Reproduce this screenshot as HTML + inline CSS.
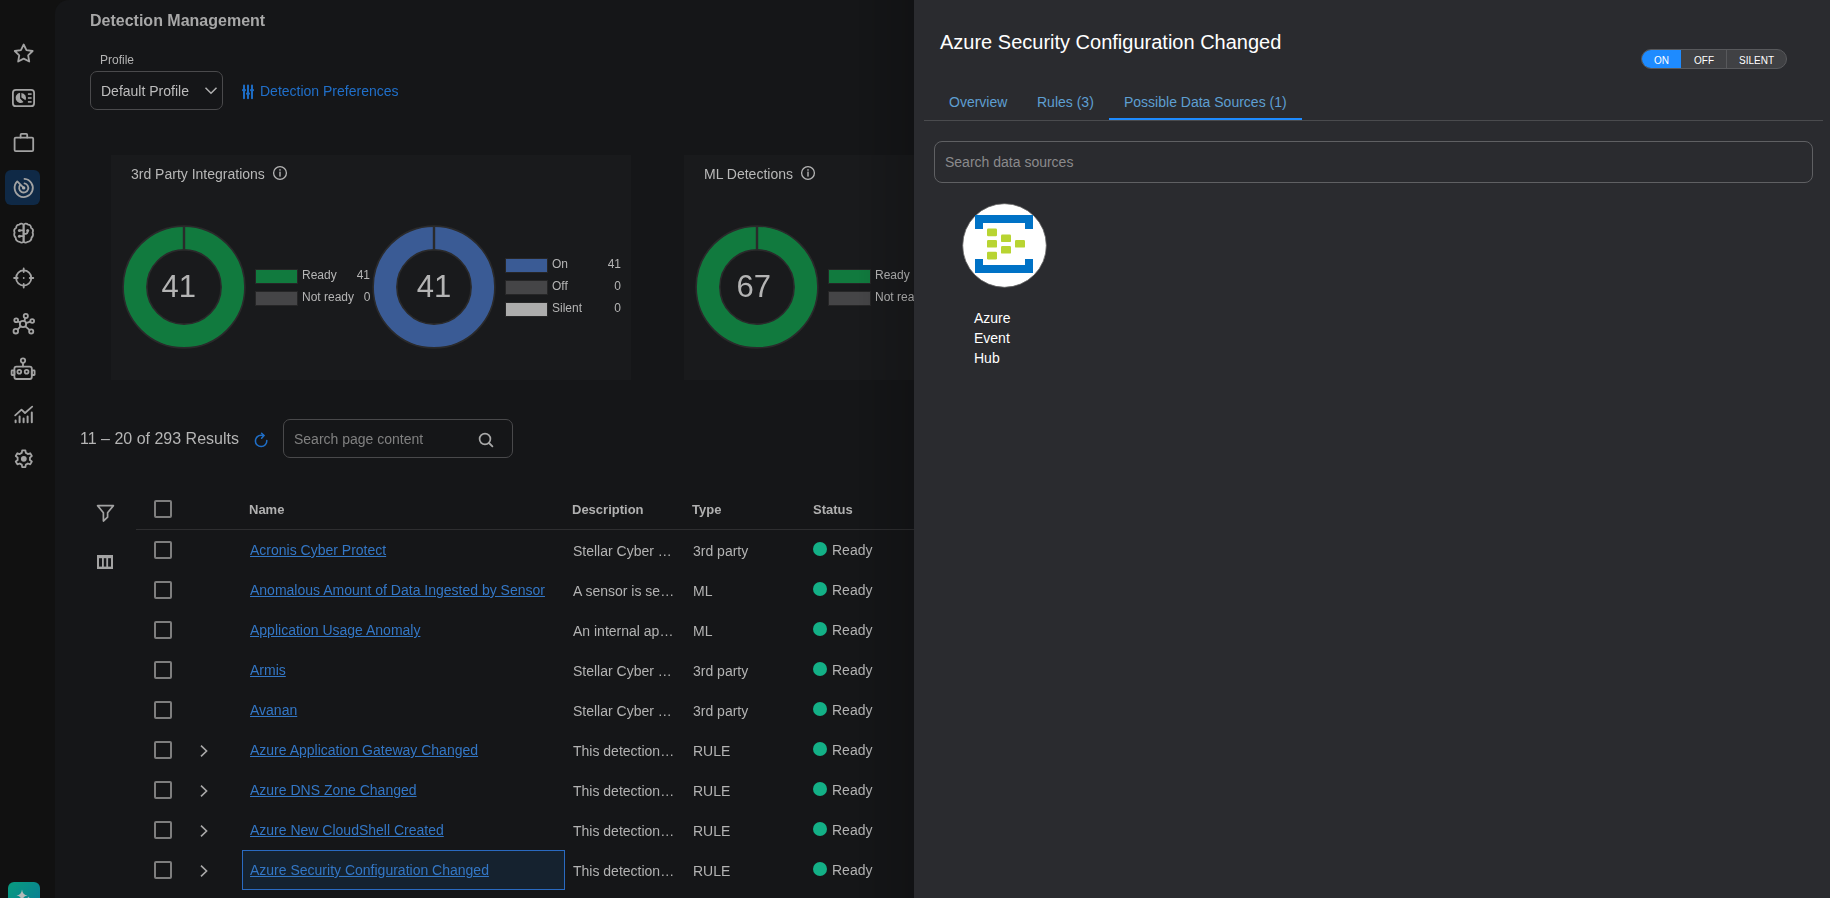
<!DOCTYPE html>
<html><head><meta charset="utf-8">
<style>
*{box-sizing:border-box;margin:0;padding:0}
html,body{width:1830px;height:898px;overflow:hidden;background:#111111;font-family:"Liberation Sans",sans-serif;}
.t{position:absolute;white-space:nowrap;line-height:1}
.a{position:absolute}
.cb{position:absolute;width:18px;height:18px;border:2px solid #7e7e7e;border-radius:2px}
.lnk{text-decoration:underline;text-underline-offset:1px}
</style></head>
<body>
<div class="a" style="left:55px;top:0;width:870px;height:898px;background:#151618;border-top-left-radius:14px"></div>
<div class="a" style="left:0;top:0;width:914px;height:898px;will-change:transform">
<svg class="a" style="left:0;top:0" width="55" height="898" viewBox="0 0 55 898">
<rect x="5" y="170" width="35" height="35" rx="6" fill="#0f2946"/>
<!-- star -->
<path d="M23.70 44.50 L26.46 50.10 L32.64 51.00 L28.17 55.35 L29.23 61.50 L23.70 58.60 L18.17 61.50 L19.23 55.35 L14.76 51.00 L20.94 50.10 Z" fill="none" stroke="#a3a3a3" stroke-width="1.8" stroke-linecap="round" stroke-linejoin="round"/>
<!-- dashboard -->
<rect x="12.9" y="89.8" width="21.2" height="16.4" rx="3" fill="none" stroke="#a3a3a3" stroke-width="1.8" stroke-linecap="round" stroke-linejoin="round"/>
<path d="M20.1 92.8 A5.1 5.1 0 1 0 23.5 102.1 L20.1 98.4 Z" fill="#a3a3a3"/>
<path d="M21.4 92.9 A5.1 5.1 0 0 1 25.5 100.2 L21.4 97.6 Z" fill="#a3a3a3"/>
<rect x="27.9" y="93.3" width="3.7" height="1.6" fill="#a3a3a3"/><rect x="27.9" y="97.2" width="3.7" height="1.6" fill="#a3a3a3"/><rect x="27.9" y="101.1" width="3.7" height="1.6" fill="#a3a3a3"/>
<!-- briefcase -->
<rect x="14.6" y="137.6" width="18.6" height="13.6" rx="1.2" fill="none" stroke="#a3a3a3" stroke-width="1.8" stroke-linecap="round" stroke-linejoin="round"/>
<path d="M20.6 137.6 V134.8 Q20.6 133.8 21.6 133.8 H26.2 Q27.2 133.8 27.2 134.8 V137.6" fill="none" stroke="#a3a3a3" stroke-width="1.8" stroke-linecap="round" stroke-linejoin="round"/>
<!-- radar -->
<path d="M24.49 178.83 A9.1 9.1 0 1 1 17.27 181.47 L23.7 187.9" fill="none" stroke="#a3a3a3" stroke-width="1.8" stroke-linecap="round" stroke-linejoin="round" stroke="#b0b0b0"/>
<path d="M24.5 183.37 A4.6 4.6 0 1 1 20.18 184.94" fill="none" stroke="#a3a3a3" stroke-width="1.8" stroke-linecap="round" stroke-linejoin="round" stroke="#b0b0b0"/>
<circle cx="23.7" cy="187.9" r="1.7" fill="#b0b0b0"/>
<!-- brain -->
<path d="M23.6 225 C23 223.6 20.6 222.9 19.4 224.6 C17.6 224.4 16 225.8 16.2 227.8 C14.4 228.8 13.9 231 14.6 232.6 C13.8 234.2 14.2 236.6 15.6 237.6 C15.6 240 17.6 242 19.8 241.8 C21 243 23 242.8 23.6 241.6 Z" fill="none" stroke="#a3a3a3" stroke-width="1.8" stroke-linecap="round" stroke-linejoin="round"/>
<path d="M23.6 225 C24.2 223.6 26.6 222.9 27.8 224.6 C29.6 224.4 31.2 225.8 31 227.8 C32.8 228.8 33.3 231 32.6 232.6 C33.4 234.2 33 236.6 31.6 237.6 C31.6 240 29.6 242 27.4 241.8 C26.2 243 24.2 242.8 23.6 241.6 Z" fill="none" stroke="#a3a3a3" stroke-width="1.8" stroke-linecap="round" stroke-linejoin="round"/>
<path d="M23.6 230.4 H20.4 M23.6 236.2 H20.4 M23.6 233.8 H25.6 Q27.6 233.8 27.6 231.6" fill="none" stroke="#a3a3a3" stroke-width="1.8" stroke-linecap="round" stroke-linejoin="round"/>
<circle cx="19.4" cy="230.4" r="1.5" fill="#a3a3a3"/><circle cx="19.4" cy="236.2" r="1.5" fill="#a3a3a3"/><circle cx="27.7" cy="230.4" r="1.5" fill="#a3a3a3"/>
<!-- crosshair -->
<circle cx="23.7" cy="278" r="7.6" fill="none" stroke="#a3a3a3" stroke-width="1.8" stroke-linecap="round" stroke-linejoin="round"/>
<path d="M23.7 268.4 V272 M23.7 284 V287.6 M14.1 278 H17.7 M29.7 278 H33.3" fill="none" stroke="#a3a3a3" stroke-width="1.8" stroke-linecap="round" stroke-linejoin="round"/>
<circle cx="23.7" cy="278" r="0.9" fill="#a3a3a3"/>
<!-- network -->
<circle cx="23" cy="324" r="3.2" fill="none" stroke="#a3a3a3" stroke-width="1.8" stroke-linecap="round" stroke-linejoin="round"/>
<circle cx="25.8" cy="316" r="2.1" fill="none" stroke="#a3a3a3" stroke-width="1.8" stroke-linecap="round" stroke-linejoin="round"/>
<circle cx="16.2" cy="320.2" r="1.9" fill="none" stroke="#a3a3a3" stroke-width="1.8" stroke-linecap="round" stroke-linejoin="round"/>
<circle cx="32.2" cy="321" r="1.9" fill="none" stroke="#a3a3a3" stroke-width="1.8" stroke-linecap="round" stroke-linejoin="round"/>
<circle cx="15.8" cy="331.2" r="2.3" fill="none" stroke="#a3a3a3" stroke-width="1.8" stroke-linecap="round" stroke-linejoin="round"/>
<circle cx="31.2" cy="331.4" r="2.1" fill="none" stroke="#a3a3a3" stroke-width="1.8" stroke-linecap="round" stroke-linejoin="round"/>
<path d="M24.4 321.1 L25.2 318.1 M20.2 322.8 L18 321.2 M26.1 323.2 L30.3 321.6 M20.7 326.2 L17.6 329.6 M25.4 326.4 L29.6 330" fill="none" stroke="#a3a3a3" stroke-width="1.8" stroke-linecap="round" stroke-linejoin="round"/>
<!-- robot -->
<circle cx="23" cy="360.6" r="2.2" fill="none" stroke="#a3a3a3" stroke-width="1.8" stroke-linecap="round" stroke-linejoin="round"/>
<path d="M23 362.8 V366.4" fill="none" stroke="#a3a3a3" stroke-width="1.8" stroke-linecap="round" stroke-linejoin="round"/>
<rect x="14.4" y="366.6" width="17.4" height="12.4" rx="2" fill="none" stroke="#a3a3a3" stroke-width="1.8" stroke-linecap="round" stroke-linejoin="round"/>
<rect x="11.6" y="370.4" width="2.8" height="4.6" rx="0.5" fill="none" stroke="#a3a3a3" stroke-width="1.8" stroke-linecap="round" stroke-linejoin="round"/>
<rect x="31.8" y="370.4" width="2.8" height="4.6" rx="0.5" fill="none" stroke="#a3a3a3" stroke-width="1.8" stroke-linecap="round" stroke-linejoin="round"/>
<circle cx="19.3" cy="371.8" r="1.9" fill="none" stroke="#a3a3a3" stroke-width="1.8" stroke-linecap="round" stroke-linejoin="round"/>
<circle cx="26.6" cy="371.8" r="1.9" fill="none" stroke="#a3a3a3" stroke-width="1.8" stroke-linecap="round" stroke-linejoin="round"/>
<!-- chart -->
<path d="M15.2 415.4 L21.5 409.6 L25 413 L32.2 406.6" fill="none" stroke="#a3a3a3" stroke-width="1.8" stroke-linecap="round" stroke-linejoin="round"/>
<path d="M15.6 420.4 V422.2 M19.6 416.6 V422.2 M23.6 418.6 V422.2 M27.6 416.6 V422.2 M31.8 412.6 V422.2" fill="none" stroke="#a3a3a3" stroke-width="2" stroke-linecap="round"/>
<!-- gear -->
<path d="M21.78 452.94 L22.18 450.46 L25.42 450.46 L25.82 452.94 A6.2 6.2 0 0 1 27.87 454.12 L27.87 454.12 L30.22 453.22 L31.84 456.03 L29.89 457.62 A6.2 6.2 0 0 1 29.89 459.98 L29.89 459.98 L31.84 461.57 L30.22 464.38 L27.87 463.48 A6.2 6.2 0 0 1 25.82 464.66 L25.82 464.66 L25.42 467.14 L22.18 467.14 L21.78 464.66 A6.2 6.2 0 0 1 19.73 463.48 L19.73 463.48 L17.38 464.38 L15.76 461.57 L17.71 459.98 A6.2 6.2 0 0 1 17.71 457.62 L17.71 457.62 L15.76 456.03 L17.38 453.22 L19.73 454.12 A6.2 6.2 0 0 1 21.78 452.94 Z" fill="none" stroke="#a3a3a3" stroke-width="1.8" stroke-linecap="round" stroke-linejoin="round"/>
<circle cx="23.8" cy="458.8" r="2.9" fill="#a3a3a3"/>
</svg>
<div class="a" style="left:8px;top:882px;width:32px;height:32px;border-radius:6px;background:linear-gradient(135deg,#089c7e,#0a7798)"></div>
<svg class="a" style="left:8px;top:882px" width="32" height="16" viewBox="0 0 32 16"><path d="M14 7.5 Q14.6 12.9 19.5 13.5 Q14.6 14.1 14 19.5 Q13.4 14.1 8.5 13.5 Q13.4 12.9 14 7.5 Z" fill="#b5b9b9"/><circle cx="20.5" cy="15.5" r="0.8" fill="#9ab"/></svg>
<div class="t" style="left:90px;top:13px;font-size:16px;color:#a8a8a8;font-weight:bold">Detection Management</div>
<div class="t" style="left:100px;top:54px;font-size:12px;color:#b3b3b3;">Profile</div>
<div class="a" style="left:90px;top:71px;width:133px;height:39px;border:1px solid #4a4a4c;border-radius:7px"></div>
<div class="t" style="left:101px;top:84px;font-size:14px;color:#bdbdbd;">Default Profile</div>
<svg class="a" style="left:203px;top:85px" width="16" height="12" viewBox="0 0 16 12"><path d="M2.5 2.8 L8 8.3 L13.5 2.8" fill="none" stroke="#b0b0b0" stroke-width="1.5"/></svg>
<svg class="a" style="left:240px;top:83px" width="16" height="18" viewBox="0 0 16 18">
<g stroke="#1d6cc4" stroke-width="2" fill="none" stroke-linecap="round"><path d="M4 2.6 V15.2 M8 2.6 V15.2 M12 2.6 V15.2"/></g>
<g fill="#1d6cc4"><rect x="2" y="6" width="4" height="2.2" rx="1"/><rect x="6" y="9.5" width="4" height="2.2" rx="1"/><rect x="10" y="6" width="4" height="2.2" rx="1"/></g>
</svg>
<div class="t" style="left:260px;top:84px;font-size:14px;color:#206fc9;">Detection Preferences</div>
<div class="a" style="left:111px;top:155px;width:520px;height:225px;background:#191a1c"></div>
<div class="a" style="left:684px;top:155px;width:240px;height:225px;background:#191a1c"></div>
<div class="t" style="left:131px;top:167px;font-size:14px;color:#b8b8b8;">3rd Party Integrations</div>
<svg class="a" style="left:272px;top:165px" width="16" height="16" viewBox="0 0 16 16"><circle cx="8" cy="8" r="6.4" fill="none" stroke="#b5b5b5" stroke-width="1.3"/><rect x="7.3" y="6.6" width="1.4" height="5" fill="#b5b5b5"/><rect x="7.3" y="4.2" width="1.4" height="1.5" fill="#b5b5b5"/></svg>
<div class="t" style="left:704px;top:167px;font-size:14px;color:#b8b8b8;">ML Detections</div>
<svg class="a" style="left:800px;top:165px" width="16" height="16" viewBox="0 0 16 16"><circle cx="8" cy="8" r="6.4" fill="none" stroke="#b5b5b5" stroke-width="1.3"/><rect x="7.3" y="6.6" width="1.4" height="5" fill="#b5b5b5"/><rect x="7.3" y="4.2" width="1.4" height="1.5" fill="#b5b5b5"/></svg>
<svg class="a" style="left:119.5px;top:222.7px" width="128" height="128" viewBox="0 0 128 128"><circle cx="64" cy="64" r="49" fill="none" stroke="#117a3e" stroke-width="23.6"/><circle cx="64" cy="64" r="60.9" fill="none" stroke="#2a2a2b" stroke-width="1.6"/><circle cx="64" cy="64" r="37.1" fill="none" stroke="#2a2a2b" stroke-width="1.6"/><rect x="62.8" y="3" width="2.4" height="23" fill="#2a2a2b"/></svg>
<div class="t" style="left:161.5px;top:271px;font-size:31px;color:#b4b4b4">41</div>
<svg class="a" style="left:369.5px;top:222.7px" width="128" height="128" viewBox="0 0 128 128"><circle cx="64" cy="64" r="49" fill="none" stroke="#3a5b95" stroke-width="23.6"/><circle cx="64" cy="64" r="60.9" fill="none" stroke="#2a2a2b" stroke-width="1.6"/><circle cx="64" cy="64" r="37.1" fill="none" stroke="#2a2a2b" stroke-width="1.6"/><rect x="62.8" y="3" width="2.4" height="23" fill="#2a2a2b"/></svg>
<div class="t" style="left:416.7px;top:271px;font-size:31px;color:#b4b4b4">41</div>
<svg class="a" style="left:692.5px;top:222.7px" width="128" height="128" viewBox="0 0 128 128"><circle cx="64" cy="64" r="49" fill="none" stroke="#117a3e" stroke-width="23.6"/><circle cx="64" cy="64" r="60.9" fill="none" stroke="#2a2a2b" stroke-width="1.6"/><circle cx="64" cy="64" r="37.1" fill="none" stroke="#2a2a2b" stroke-width="1.6"/><rect x="62.8" y="3" width="2.4" height="23" fill="#2a2a2b"/></svg>
<div class="t" style="left:736.5px;top:271px;font-size:31px;color:#b4b4b4">67</div>
<div class="a" style="left:256px;top:270px;width:41px;height:13px;background:#117a3e;box-shadow:0 0 0 1px #262627"></div>
<div class="a" style="left:256px;top:292px;width:41px;height:13px;background:#454547;box-shadow:0 0 0 1px #262627"></div>
<div class="t" style="left:302px;top:269px;font-size:12px;color:#b5b5b5;">Ready</div>
<div class="t" style="left:302px;top:291px;font-size:12px;color:#b5b5b5;">Not ready</div>
<div class="t" style="left:340px;width:30px;text-align:right;top:269px;font-size:12px;color:#b5b5b5">41</div>
<div class="t" style="left:340px;width:30.5px;text-align:right;top:291px;font-size:12px;color:#b5b5b5">0</div>
<div class="a" style="left:506px;top:259px;width:41px;height:13px;background:#3a5b95;box-shadow:0 0 0 1px #262627"></div>
<div class="a" style="left:506px;top:281px;width:41px;height:13px;background:#454547;box-shadow:0 0 0 1px #262627"></div>
<div class="a" style="left:506px;top:303px;width:41px;height:13px;background:#acacac;box-shadow:0 0 0 1px #262627"></div>
<div class="t" style="left:552px;top:258px;font-size:12px;color:#b5b5b5;">On</div>
<div class="t" style="left:552px;top:280px;font-size:12px;color:#b5b5b5;">Off</div>
<div class="t" style="left:552px;top:302px;font-size:12px;color:#b5b5b5;">Silent</div>
<div class="t" style="left:590px;width:31px;text-align:right;top:258px;font-size:12px;color:#b5b5b5">41</div>
<div class="t" style="left:590px;width:31px;text-align:right;top:280px;font-size:12px;color:#b5b5b5">0</div>
<div class="t" style="left:590px;width:31px;text-align:right;top:302px;font-size:12px;color:#b5b5b5">0</div>
<div class="a" style="left:829px;top:270px;width:41px;height:13px;background:#117a3e;box-shadow:0 0 0 1px #262627"></div>
<div class="a" style="left:829px;top:292px;width:41px;height:13px;background:#454547;box-shadow:0 0 0 1px #262627"></div>
<div class="t" style="left:875px;top:269px;font-size:12px;color:#b5b5b5;">Ready</div>
<div class="t" style="left:875px;top:291px;font-size:12px;color:#b5b5b5;">Not ready</div>
<div class="t" style="left:80px;top:431px;font-size:16px;color:#b5b5b5;">11 – 20 of 293 Results</div>
<svg class="a" style="left:252.8px;top:431px" width="18" height="18" viewBox="0 0 18 18">
<path d="M13.8 9.6 A5.7 5.7 0 1 1 8.2 4.2 L10.8 4.4" fill="none" stroke="#1f6fc8" stroke-width="1.55" stroke-linecap="round"/>
<path d="M8.6 2.2 L11 4.5 L8.6 7.2" fill="none" stroke="#1f6fc8" stroke-width="1.55" stroke-linecap="round" stroke-linejoin="round"/>
</svg>
<div class="a" style="left:283px;top:419px;width:230px;height:39px;border:1px solid #49494b;border-radius:7px"></div>
<div class="t" style="left:294px;top:432px;font-size:14px;color:#808080;">Search page content</div>
<svg class="a" style="left:477px;top:431px" width="18" height="18" viewBox="0 0 18 18"><circle cx="8" cy="8" r="5.4" fill="none" stroke="#a8a8a8" stroke-width="1.7"/><path d="M12 12 L15.4 15.4" stroke="#a8a8a8" stroke-width="1.8" stroke-linecap="round"/></svg>
<svg class="a" style="left:95px;top:503px" width="20" height="20" viewBox="0 0 20 20"><path d="M2.6 2.6 H18.4 L12.6 9.8 V14.2 L8.4 18 V9.8 Z" fill="none" stroke="#a3a3a3" stroke-width="1.7" stroke-linejoin="round"/></svg>
<svg class="a" style="left:95px;top:553px" width="20" height="20" viewBox="0 0 20 20"><g fill="#a3a3a3"><rect x="2" y="2" width="16" height="3.2"/><rect x="2" y="13.6" width="16" height="2.4"/><rect x="2" y="2" width="2" height="14"/><rect x="16" y="2" width="2" height="14"/><rect x="7" y="2" width="1.8" height="14"/><rect x="11.3" y="2" width="1.8" height="14"/></g></svg>
<div class="cb" style="left:154px;top:500px"></div>
<div class="t" style="left:249px;top:503px;font-size:13px;color:#b0b0b0;font-weight:bold">Name</div>
<div class="t" style="left:572px;top:503px;font-size:13px;color:#b0b0b0;font-weight:bold">Description</div>
<div class="t" style="left:692px;top:503px;font-size:13px;color:#b0b0b0;font-weight:bold">Type</div>
<div class="t" style="left:813px;top:503px;font-size:13px;color:#b0b0b0;font-weight:bold">Status</div>
<div class="a" style="left:136px;top:529px;width:790px;height:1px;background:#2e2e30"></div>
<div class="cb" style="left:154px;top:541px"></div>
<div class="t" style="left:250px;top:543px;font-size:14px;color:#3377c6;text-decoration:underline">Acronis Cyber Protect</div>
<div class="t" style="left:573px;top:544px;font-size:14px;color:#b3b3b3;">Stellar Cyber …</div>
<div class="t" style="left:693px;top:544px;font-size:14px;color:#b3b3b3;">3rd party</div>
<div class="a" style="left:813px;top:542px;width:14px;height:14px;border-radius:50%;background:#13b086"></div>
<div class="t" style="left:832px;top:543px;font-size:14px;color:#b3b3b3;">Ready</div>
<div class="cb" style="left:154px;top:581px"></div>
<div class="t" style="left:250px;top:583px;font-size:14px;color:#3377c6;text-decoration:underline">Anomalous Amount of Data Ingested by Sensor</div>
<div class="t" style="left:573px;top:584px;font-size:14px;color:#b3b3b3;">A sensor is se…</div>
<div class="t" style="left:693px;top:584px;font-size:14px;color:#b3b3b3;">ML</div>
<div class="a" style="left:813px;top:582px;width:14px;height:14px;border-radius:50%;background:#13b086"></div>
<div class="t" style="left:832px;top:583px;font-size:14px;color:#b3b3b3;">Ready</div>
<div class="cb" style="left:154px;top:621px"></div>
<div class="t" style="left:250px;top:623px;font-size:14px;color:#3377c6;text-decoration:underline">Application Usage Anomaly</div>
<div class="t" style="left:573px;top:624px;font-size:14px;color:#b3b3b3;">An internal ap…</div>
<div class="t" style="left:693px;top:624px;font-size:14px;color:#b3b3b3;">ML</div>
<div class="a" style="left:813px;top:622px;width:14px;height:14px;border-radius:50%;background:#13b086"></div>
<div class="t" style="left:832px;top:623px;font-size:14px;color:#b3b3b3;">Ready</div>
<div class="cb" style="left:154px;top:661px"></div>
<div class="t" style="left:250px;top:663px;font-size:14px;color:#3377c6;text-decoration:underline">Armis</div>
<div class="t" style="left:573px;top:664px;font-size:14px;color:#b3b3b3;">Stellar Cyber …</div>
<div class="t" style="left:693px;top:664px;font-size:14px;color:#b3b3b3;">3rd party</div>
<div class="a" style="left:813px;top:662px;width:14px;height:14px;border-radius:50%;background:#13b086"></div>
<div class="t" style="left:832px;top:663px;font-size:14px;color:#b3b3b3;">Ready</div>
<div class="cb" style="left:154px;top:701px"></div>
<div class="t" style="left:250px;top:703px;font-size:14px;color:#3377c6;text-decoration:underline">Avanan</div>
<div class="t" style="left:573px;top:704px;font-size:14px;color:#b3b3b3;">Stellar Cyber …</div>
<div class="t" style="left:693px;top:704px;font-size:14px;color:#b3b3b3;">3rd party</div>
<div class="a" style="left:813px;top:702px;width:14px;height:14px;border-radius:50%;background:#13b086"></div>
<div class="t" style="left:832px;top:703px;font-size:14px;color:#b3b3b3;">Ready</div>
<div class="cb" style="left:154px;top:741px"></div>
<svg class="a" style="left:198px;top:743px" width="12" height="16" viewBox="0 0 12 16"><path d="M3 2.6 L8.6 8 L3 13.4" fill="none" stroke="#a9a9a9" stroke-width="1.6"/></svg>
<div class="t" style="left:250px;top:743px;font-size:14px;color:#3377c6;text-decoration:underline">Azure Application Gateway Changed</div>
<div class="t" style="left:573px;top:744px;font-size:14px;color:#b3b3b3;">This detection…</div>
<div class="t" style="left:693px;top:744px;font-size:14px;color:#b3b3b3;">RULE</div>
<div class="a" style="left:813px;top:742px;width:14px;height:14px;border-radius:50%;background:#13b086"></div>
<div class="t" style="left:832px;top:743px;font-size:14px;color:#b3b3b3;">Ready</div>
<div class="cb" style="left:154px;top:781px"></div>
<svg class="a" style="left:198px;top:783px" width="12" height="16" viewBox="0 0 12 16"><path d="M3 2.6 L8.6 8 L3 13.4" fill="none" stroke="#a9a9a9" stroke-width="1.6"/></svg>
<div class="t" style="left:250px;top:783px;font-size:14px;color:#3377c6;text-decoration:underline">Azure DNS Zone Changed</div>
<div class="t" style="left:573px;top:784px;font-size:14px;color:#b3b3b3;">This detection…</div>
<div class="t" style="left:693px;top:784px;font-size:14px;color:#b3b3b3;">RULE</div>
<div class="a" style="left:813px;top:782px;width:14px;height:14px;border-radius:50%;background:#13b086"></div>
<div class="t" style="left:832px;top:783px;font-size:14px;color:#b3b3b3;">Ready</div>
<div class="cb" style="left:154px;top:821px"></div>
<svg class="a" style="left:198px;top:823px" width="12" height="16" viewBox="0 0 12 16"><path d="M3 2.6 L8.6 8 L3 13.4" fill="none" stroke="#a9a9a9" stroke-width="1.6"/></svg>
<div class="t" style="left:250px;top:823px;font-size:14px;color:#3377c6;text-decoration:underline">Azure New CloudShell Created</div>
<div class="t" style="left:573px;top:824px;font-size:14px;color:#b3b3b3;">This detection…</div>
<div class="t" style="left:693px;top:824px;font-size:14px;color:#b3b3b3;">RULE</div>
<div class="a" style="left:813px;top:822px;width:14px;height:14px;border-radius:50%;background:#13b086"></div>
<div class="t" style="left:832px;top:823px;font-size:14px;color:#b3b3b3;">Ready</div>
<div class="a" style="left:242px;top:850px;width:323px;height:40px;background:#15222f;border:1px solid #2a6ac0"></div>
<div class="cb" style="left:154px;top:861px"></div>
<svg class="a" style="left:198px;top:863px" width="12" height="16" viewBox="0 0 12 16"><path d="M3 2.6 L8.6 8 L3 13.4" fill="none" stroke="#a9a9a9" stroke-width="1.6"/></svg>
<div class="t" style="left:250px;top:863px;font-size:14px;color:#3377c6;text-decoration:underline">Azure Security Configuration Changed</div>
<div class="t" style="left:573px;top:864px;font-size:14px;color:#b3b3b3;">This detection…</div>
<div class="t" style="left:693px;top:864px;font-size:14px;color:#b3b3b3;">RULE</div>
<div class="a" style="left:813px;top:862px;width:14px;height:14px;border-radius:50%;background:#13b086"></div>
<div class="t" style="left:832px;top:863px;font-size:14px;color:#b3b3b3;">Ready</div>
</div>
<div class="a" style="left:858px;top:0;width:56px;height:898px;background:linear-gradient(90deg,rgba(0,0,0,0),rgba(0,0,0,0.16))"></div>
<div class="a" style="left:914px;top:0;width:916px;height:898px;background:#2a2b2f"></div>
<div class="t" style="left:940px;top:32px;font-size:20px;color:#ffffff;">Azure Security Configuration Changed</div>
<div class="a" style="left:1641px;top:49px;width:146px;height:20px;border:1px solid #58595c;border-radius:10px;background:#404144;overflow:hidden">
<div class="a" style="left:0;top:0;width:39px;height:18px;background:#1e8bff"></div>
<div class="a" style="left:84px;top:0;width:1px;height:18px;background:#58595c"></div>
</div>
<div class="t" style="left:1654px;top:56px;font-size:10px;color:#ffffff;">ON</div>
<div class="t" style="left:1694px;top:56px;font-size:10px;color:#ffffff;">OFF</div>
<div class="t" style="left:1739px;top:56px;font-size:10px;color:#ffffff;">SILENT</div>
<div class="t" style="left:949px;top:95px;font-size:14px;color:#5e9fd2;">Overview</div>
<div class="t" style="left:1037px;top:95px;font-size:14px;color:#5e9fd2;">Rules (3)</div>
<div class="t" style="left:1124px;top:95px;font-size:14px;color:#5e9fd2;">Possible Data Sources (1)</div>
<div class="a" style="left:924px;top:120px;width:899px;height:1px;background:#4a4b4e"></div>
<div class="a" style="left:1109px;top:118px;width:193px;height:2px;background:#1e8bff"></div>
<div class="a" style="left:934px;top:141px;width:879px;height:42px;border:1px solid #5f6063;border-radius:8px"></div>
<div class="t" style="left:945px;top:155px;font-size:14px;color:#8a8a8c;">Search data sources</div>
<svg class="a" style="left:962px;top:203px" width="85" height="85" viewBox="0 0 85 85">
<circle cx="42.5" cy="42.5" r="41.8" fill="#ffffff" stroke="#666" stroke-width="0.8"/>
<path d="M13 12 H71 V26 H63 V20 H21 V26 H13 Z" fill="#0072c6"/>
<path d="M13 56 H21 V62 H63 V56 H71 V70 H13 Z" fill="#0072c6"/>
<g fill="#b8d432">
<rect x="25" y="25.6" width="10" height="7.6" rx="1.2"/>
<rect x="25" y="37" width="10" height="7.6" rx="1.2"/>
<rect x="25" y="48.8" width="10" height="7.6" rx="1.2"/>
<rect x="39" y="31.5" width="10" height="7.6" rx="1.2"/>
<rect x="39" y="43" width="10" height="7.6" rx="1.2"/>
<rect x="53" y="37" width="10" height="7.6" rx="1.2"/>
</g>
</svg>
<div class="t" style="left:974px;top:311px;font-size:14px;color:#ffffff;">Azure</div>
<div class="t" style="left:974px;top:331px;font-size:14px;color:#ffffff;">Event</div>
<div class="t" style="left:974px;top:351px;font-size:14px;color:#ffffff;">Hub</div>
</body></html>
